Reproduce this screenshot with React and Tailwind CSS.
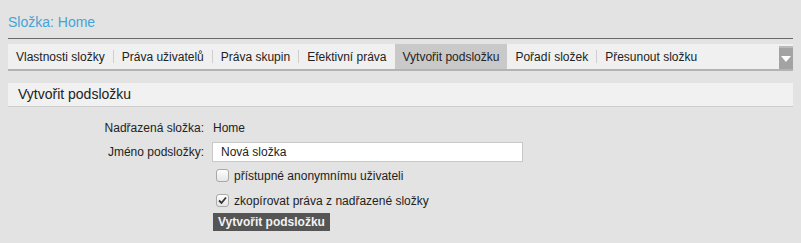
import React from 'react';

const tabs = [
    { label: 'Vlastnosti složky' },
    { label: 'Práva uživatelů' },
    { label: 'Práva skupin' },
    { label: 'Efektivní práva' },
    { label: 'Vytvořit podsložku', active: true },
    { label: 'Pořadí složek' },
    { label: 'Přesunout složku' },
];

function Checkbox({ checked }) {
    return (
        <span className="w-[13px] h-[13px] rounded-[3px] border border-[#a9a9a9] bg-gradient-to-b from-[#fdfdfd] to-[#e6e6e6] flex items-center justify-center">
            {checked && (
                <svg width="9" height="9" viewBox="0 0 9 9">
                    <path d="M1 4.5 L3.5 7 L8 1.5" fill="none" stroke="#333" strokeWidth="1.8" />
                </svg>
            )}
        </span>
    );
}

export default function App() {
    return (
        <div className="min-h-[243px] bg-[#e3e3e3] px-2 pt-[13px] text-[12px] text-[#222] font-['Liberation_Sans',Arial,sans-serif]">
            {/* Title */}
            <h1 className="text-[14px] leading-[18px] text-[#45a3d6] pb-[7px] border-b border-[#6a6a6a]">
                Složka: Home
            </h1>

            {/* Tabs */}
            <div className="mt-[5px] h-[27px] flex bg-[#f0f0f0] border-b-2 border-[#b3b3b3]">
                <div className="flex flex-1 items-stretch">
                    {tabs.map((tab, i) => {
                        const prevActive = i > 0 && tabs[i - 1].active;
                        const showSep = i > 0 && !tab.active && !prevActive;
                        return (
                            <div key={tab.label} className="flex items-center">
                                {showSep && <span className="w-px h-[13px] bg-[#cfcfcf]" />}
                                <span className={`h-full flex items-center px-2 ${tab.active ? 'bg-[#c9c9c9]' : ''}`}>
                                    {tab.label}
                                </span>
                            </div>
                        );
                    })}
                </div>
                <div className="w-[14px] mt-[2px] bg-[#a3a3a3] border-t-2 border-[#b9b9b9] flex items-center justify-center">
                    <svg width="10" height="6" viewBox="0 0 10 6">
                        <path d="M0 0 H10 L5 6 Z" fill="#fff" />
                    </svg>
                </div>
            </div>

            {/* Section header */}
            <div className="mt-3 h-6 bg-[#f1f1f1] border-b border-[#cdcdcd] flex items-center px-[10px] text-[14px]">
                Vytvořit podsložku
            </div>

            {/* Form */}
            <div className="mt-[13px] grid grid-cols-[196px_1fr] gap-x-2 items-center">
                <span className="text-right leading-[16px]">Nadřazená složka:</span>
                <span className="leading-[16px] pl-px">Home</span>

                <span className="text-right mt-[6px]">Jméno podsložky:</span>
                <input
                    defaultValue="Nová složka"
                    className="mt-[6px] w-[311px] h-5 bg-white border border-[#c8c8c8] px-2 text-[12px] text-[#222] outline-none"
                />

                <span />
                <label className="mt-[7px] h-[13px] flex items-center gap-[5px] pl-1">
                    <Checkbox />
                    <span>přístupné anonymnímu uživateli</span>
                </label>

                <span />
                <label className="mt-3 h-[13px] flex items-center gap-[5px] pl-1">
                    <Checkbox checked />
                    <span>zkopírovat práva z nadřazené složky</span>
                </label>

                <span />
                <div className="mt-[6px] ml-px">
                    <button className="h-[18px] px-[5px] bg-[#555] text-[#f2f2f2] font-bold text-[12px] leading-[18px]">
                        Vytvořit podsložku
                    </button>
                </div>
            </div>
        </div>
    );
}
